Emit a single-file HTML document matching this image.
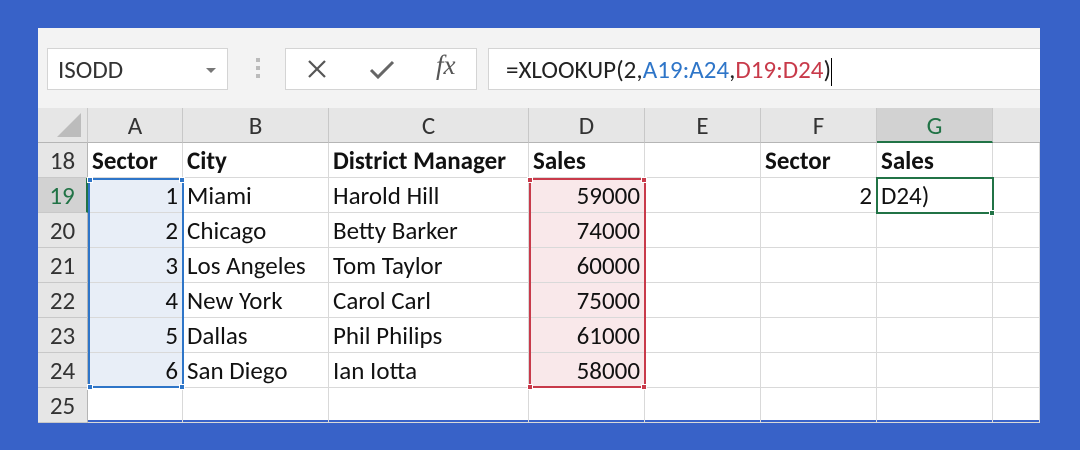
<!DOCTYPE html>
<html><head><meta charset="utf-8"><style>
*{margin:0;padding:0;box-sizing:border-box}
body{width:1080px;height:450px;background:#3862c8;position:relative;overflow:hidden;font-family:Calibri,"Carlito","Liberation Sans",sans-serif}
.win{position:absolute;left:38px;top:28px;width:1002px;height:392px;background:#f3f3f3;overflow:hidden}
.box{position:absolute;background:#fff;border:1px solid #d4d4d4}
.a{position:absolute}
.grid{position:absolute;left:0;top:80px;width:1002px;height:312px;background:#fff}
.ch{position:absolute;top:0;height:35px;background:#e6e6e6;border-right:1px solid #c8c8c8;border-bottom:1px solid #b5b5b5;text-align:center;font-size:25px;line-height:35px;color:#333}
.rh{position:absolute;left:0;width:50px;height:35px;background:#e6e6e6;border-bottom:1px solid #c8c8c8;border-right:1px solid #b5b5b5;text-align:center;font-size:25px;line-height:35px;color:#333}
.c{position:absolute;height:35px;border-right:1px solid #d9d9d9;border-bottom:1px solid #d9d9d9;font-size:25px;line-height:35px;color:#111;padding:0 4px;white-space:nowrap;overflow:hidden}
.r{text-align:right}
.b{font-weight:bold}
</style></head><body>
<div class="win">
  <div class="box" style="left:9px;top:20px;width:181px;height:42px"></div>
  <div class="a" style="left:20px;top:26px;font-size:25px;color:#333">ISODD</div>
  <div class="a" style="left:168px;top:40px;width:0;height:0;border-left:5px solid transparent;border-right:5px solid transparent;border-top:5px solid #777"></div>
  <div class="a" style="left:218px;top:30px;width:4px;height:4px;background:#bbb;box-shadow:0 8px 0 #bbb,0 16px 0 #bbb"></div>
  <div class="box" style="left:247px;top:20px;width:192px;height:42px"></div>
  <svg class="a" style="left:268px;top:30px" width="22" height="22"><path d="M3 3L19 19M19 3L3 19" stroke="#555" stroke-width="2.2"/></svg>
  <svg class="a" style="left:330px;top:30px" width="28" height="22"><path d="M3 12L10 19L25 4" stroke="#666" stroke-width="3" fill="none"/></svg>
  <div class="a" style="left:398px;top:22px;font-size:27px;font-style:italic;font-family:'Liberation Serif',serif;color:#555">fx</div>
  <div class="box" style="left:450px;top:20px;width:560px;height:42px"></div>
  <div class="a" style="left:468px;top:26px;font-size:25px;color:#222;white-space:nowrap">=XLOOKUP(2,<span style="color:#2e75c8">A19:A24</span>,<span style="color:#c83a4a">D19:D24</span>)<span style="display:inline-block;width:1px;height:28px;background:#000;vertical-align:middle"></span></div>

  <div class="grid">
    <div class="ch" style="left:0;width:50px;background:#e6e6e6"><div style="position:absolute;right:6px;bottom:5px;width:0;height:0;border-left:24px solid transparent;border-bottom:24px solid #bcbcbc"></div></div>
    <div class="ch" style="left:50px;width:95px">A</div>
    <div class="ch" style="left:145px;width:146px">B</div>
    <div class="ch" style="left:291px;width:200px">C</div>
    <div class="ch" style="left:491px;width:116px">D</div>
    <div class="ch" style="left:607px;width:116px">E</div>
    <div class="ch" style="left:723px;width:116px">F</div>
    <div class="ch" style="left:839px;width:116px;background:#d2d2d2;color:#217346;border-bottom:2px solid #217346">G</div>
    <div class="ch" style="left:955px;width:47px;border-right:none"></div>
  </div>
</div>
<div id="rows" style="position:absolute;left:38px;top:143px"></div>
<script>
var cols=[50,95,146,200,116,116,116,116,47];
var data=[
["18","Sector","City","District Manager","Sales","","Sector","Sales",""],
["19","1","Miami","Harold Hill","59000","","2","D24)",""],
["20","2","Chicago","Betty Barker","74000","","","",""],
["21","3","Los Angeles","Tom Taylor","60000","","","",""],
["22","4","New York","Carol Carl","75000","","","",""],
["23","5","Dallas","Phil Philips","61000","","","",""],
["24","6","San Diego","Ian Iotta","58000","","","",""],
["25","","","","","","","",""]];
var h="";
data.forEach(function(r,i){
 var y=i*35,x=0;
 r.forEach(function(v,j){
  var w=cols[j];
  if(j==0){
   var st=i==1?'background:#d2d2d2;color:#217346;border-right:2px solid #217346':'';
   h+='<div class="rh" style="top:'+y+'px;'+st+'">'+v+'</div>';
  }else{
   var cls="c",st="";
   if(i==0)cls+=" b";
   else if(j==1||j==4||j==6)cls+=" r";
   if(i>=1&&i<=6&&j==1)st+="background:#e8eef7;";
   if(i>=1&&i<=6&&j==4)st+="background:#f9e8ea;";
   h+='<div class="'+cls+'" style="left:'+x+'px;top:'+y+'px;width:'+w+'px;'+st+'">'+v+'</div>';
  }
  x+=w;
 });
});
h+='<div style="position:absolute;left:50px;top:35px;width:96px;height:210px;border:2px solid #2e75c8"></div>';
h+='<div style="position:absolute;left:491px;top:35px;width:117px;height:210px;border:2px solid #c83a4a"></div>';
h+='<div style="position:absolute;left:838px;top:34px;width:118px;height:37px;border:2px solid #217346"></div>';
[[49,34,'#2e75c8'],[141,34,'#2e75c8'],[49,241,'#2e75c8'],[141,241,'#2e75c8'],[489,34,'#c83a4a'],[603,34,'#c83a4a'],[489,241,'#c83a4a'],[603,241,'#c83a4a'],[951,67,'#217346']].forEach(function(p){
 h+='<div style="position:absolute;left:'+p[0]+'px;top:'+p[1]+'px;width:6px;height:6px;background:'+p[2]+';border:1px solid #fff"></div>';
});
document.getElementById('rows').innerHTML=h;
</script>
</body></html>
